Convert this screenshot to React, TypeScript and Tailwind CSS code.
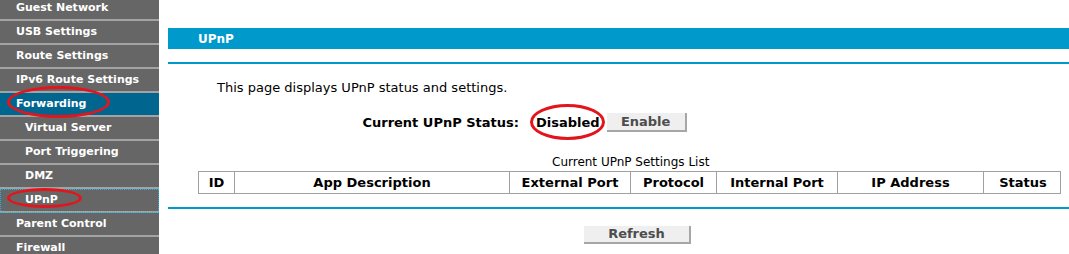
import React from "react";

const menu: { label: string; sub?: boolean; active?: boolean; current?: boolean }[] = [
  { label: "Guest Network" },
  { label: "USB Settings" },
  { label: "Route Settings" },
  { label: "IPv6 Route Settings" },
  { label: "Forwarding", active: true },
  { label: "Virtual Server", sub: true },
  { label: "Port Triggering", sub: true },
  { label: "DMZ", sub: true },
  { label: "UPnP", sub: true, current: true },
  { label: "Parent Control" },
  { label: "Firewall" },
];

const cols = [
  { label: "ID", w: "w-[35px]" },
  { label: "App Description", w: "w-[275px]" },
  { label: "External Port", w: "w-[121px]" },
  { label: "Protocol", w: "w-[86px]" },
  { label: "Internal Port", w: "w-[121px]" },
  { label: "IP Address", w: "w-[146px]" },
  { label: "Status", w: "w-[79px]" },
];

export default function App() {
  return (
    <div className="relative flex w-[1069px] h-[254px] overflow-hidden bg-white font-['DejaVu_Sans',sans-serif]">
      <aside className="w-[159px] shrink-0 bg-[#666666] -mt-[3px]">
        {menu.map((m) => (
          <div
            key={m.label}
            className={
              "h-[24px] border-b-2 border-[#a3a3a3] flex items-center text-[11px] font-bold " +
              (m.sub ? "pl-[25px] " : "pl-[16px] ") +
              (m.active ? "bg-[#00668f] text-white " : "text-white ") +
              (m.current ? "text-[#16b8ec] outline-1 outline-dotted outline-[#16b8ec] -outline-offset-1" : "")
            }
          >
            {m.label}
          </div>
        ))}
      </aside>

      <main className="flex-1 pl-[9px] pt-[28px] text-[13px] text-black">
        <div className="h-[21px] bg-[#0099cc] text-white text-[12px] font-bold flex items-center pl-[30px]">UPnP</div>
        <div className="mt-[13px] h-[2px] bg-[#0099cc]" />

        <p className="mt-[16px] pl-[49px] leading-[15px]">This page displays UPnP status and settings.</p>

        <div className="mt-[18px] flex items-center h-[19px]">
          <span className="w-[351px] text-right font-bold">Current UPnP Status:</span>
          <span className="ml-[17px] font-bold">Disabled</span>
          <button className="ml-[7px] w-[80px] h-[19px] bg-[#efefef] border-r-2 border-b-2 border-[#a6a6a6] text-[#4d4d4d] font-bold text-[13px] leading-none">
            Enable
          </button>
        </div>

        <p className="mt-[23px] pl-[384px] leading-[15px] text-[12px]">Current UPnP Settings List</p>

        <div className="mt-[1px] ml-[30px] flex w-[863px] h-[23px] border border-[#a0a0a0]">
          {cols.map((c, i) => (
            <div
              key={c.label}
              className={
                c.w +
                " shrink-0 flex items-center justify-center font-bold " +
                (i > 0 ? "border-l border-[#a0a0a0]" : "")
              }
            >
              {c.label}
            </div>
          ))}
        </div>

        <div className="mt-[13px] h-[2px] bg-[#0099cc]" />

        <div className="mt-[15px] pl-[416px]">
          <button className="w-[107px] h-[18px] bg-[#efefef] border-r-2 border-b-2 border-[#a6a6a6] text-[#4d4d4d] font-bold text-[13px] leading-none">
            Refresh
          </button>
        </div>
      </main>

      {/* red annotation ellipses */}
      <div className="absolute left-[7px] top-[86px] w-[103px] h-[32px] rounded-[50%] border-[3px] border-[#e3151c]" />
      <div className="absolute left-[7px] top-[188px] w-[75px] h-[20px] rounded-[50%] border-[3px] border-[#e3151c]" />
      <div className="absolute left-[530px] top-[104px] w-[75px] h-[36px] rounded-[50%] border-[3px] border-[#e3151c]" />
    </div>
  );
}
